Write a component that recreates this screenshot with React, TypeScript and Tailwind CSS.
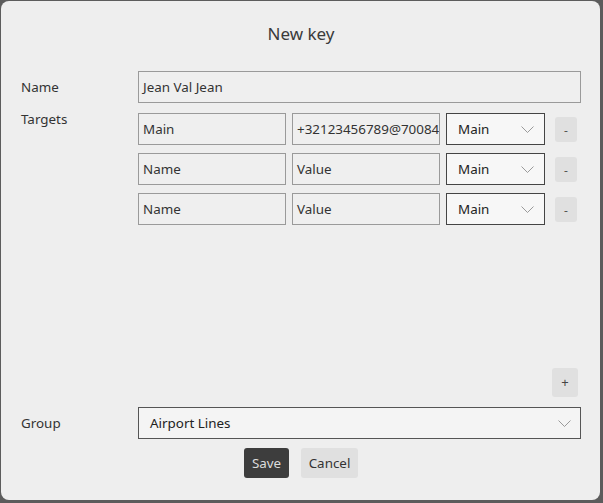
import React from "react";

const font = { fontFamily: '"Segoe UI", "Noto Sans", "Open Sans", sans-serif' };

function Chevron() {
  return (
    <svg width="13" height="7" viewBox="0 0 13 7" fill="none">
      <path d="M0.5 0.5 L6.5 6.5 L12.5 0.5" stroke="#8f8f8f" strokeWidth="0.9" />
    </svg>
  );
}

function TextBox({ value, className = "" }: { value: string; className?: string }) {
  return (
    <div
      className={
        "h-[32px] border border-[#9a9a9a] bg-[#efefef] flex items-center pl-[4px] pt-[1px] text-[13.4px] text-[#333] overflow-hidden whitespace-nowrap " +
        className
      }
    >
      {value}
    </div>
  );
}

function Row({ name, value }: { name: string; value: string }) {
  return (
    <div className="flex items-center h-[32px]">
      <TextBox value={name} className="w-[148px]" />
      <TextBox value={value} className="w-[148px] ml-[6px]" />
      <div className="w-[99px] h-[32px] ml-[6px] border border-[#444] bg-[#f7f7f7] flex items-center justify-between pl-[11px] pr-[10px] text-[13.4px] text-[#222]">
        <span>Main</span>
        <Chevron />
      </div>
      <div className="w-[22px] h-[25px] ml-[10px] rounded-[3px] bg-[#e0e0e0] flex items-center justify-center text-[12px] text-[#555] pt-[4px]">
        -
      </div>
    </div>
  );
}

export default function App() {
  return (
    <div className="w-[603px] h-[503px] bg-[#5c5c5c] p-px" style={font}>
      <div className="w-[599px] h-[499px] rounded-[8px] bg-[#eeeeee] flex flex-col pl-[20px] pr-[19px] pt-[21px] pb-[22px]">
        <div className="text-center text-[17px] leading-[24px] text-[#3a3a3a]">New key</div>

        <div className="flex items-center mt-[25px] h-[32px]">
          <div className="w-[117px] text-[13.4px] text-[#333]">Name</div>
          <TextBox value="Jean Val Jean" className="flex-1" />
        </div>

        <div className="flex mt-[6px]">
          <div className="w-[117px] text-[13.4px] leading-[20px] text-[#333]">Targets</div>
          <div className="flex flex-col gap-[8px] pt-[4px]">
            <Row name="Main" value="+32123456789@700844" />
            <Row name="Name" value="Value" />
            <Row name="Name" value="Value" />
          </div>
        </div>

        <div className="flex-1" />

        <div className="flex justify-end pr-[3px]">
          <div className="w-[26px] h-[29px] rounded-[3px] bg-[#e0e0e0] flex items-center justify-center text-[13px] text-[#444]">
            +
          </div>
        </div>

        <div className="flex items-center mt-[10px] h-[32px]">
          <div className="w-[117px] text-[13.4px] text-[#333]">Group</div>
          <div className="flex-1 h-[32px] border border-[#555] bg-[#f4f4f4] flex items-center justify-between pl-[11px] pr-[9px] text-[13.4px] text-[#222]">
            <span>Airport Lines</span>
            <Chevron />
          </div>
        </div>

        <div className="flex justify-center gap-[12px] mt-[9px]">
          <div className="h-[30px] w-[45px] rounded-[3px] bg-[#3d3d3d] text-[#dcdcdc] text-[13.4px] flex items-center justify-center">Save</div>
          <div className="h-[30px] w-[57px] rounded-[3px] bg-[#e0e0e0] text-[#333] text-[13.4px] flex items-center justify-center">Cancel</div>
        </div>
      </div>
    </div>
  );
}
